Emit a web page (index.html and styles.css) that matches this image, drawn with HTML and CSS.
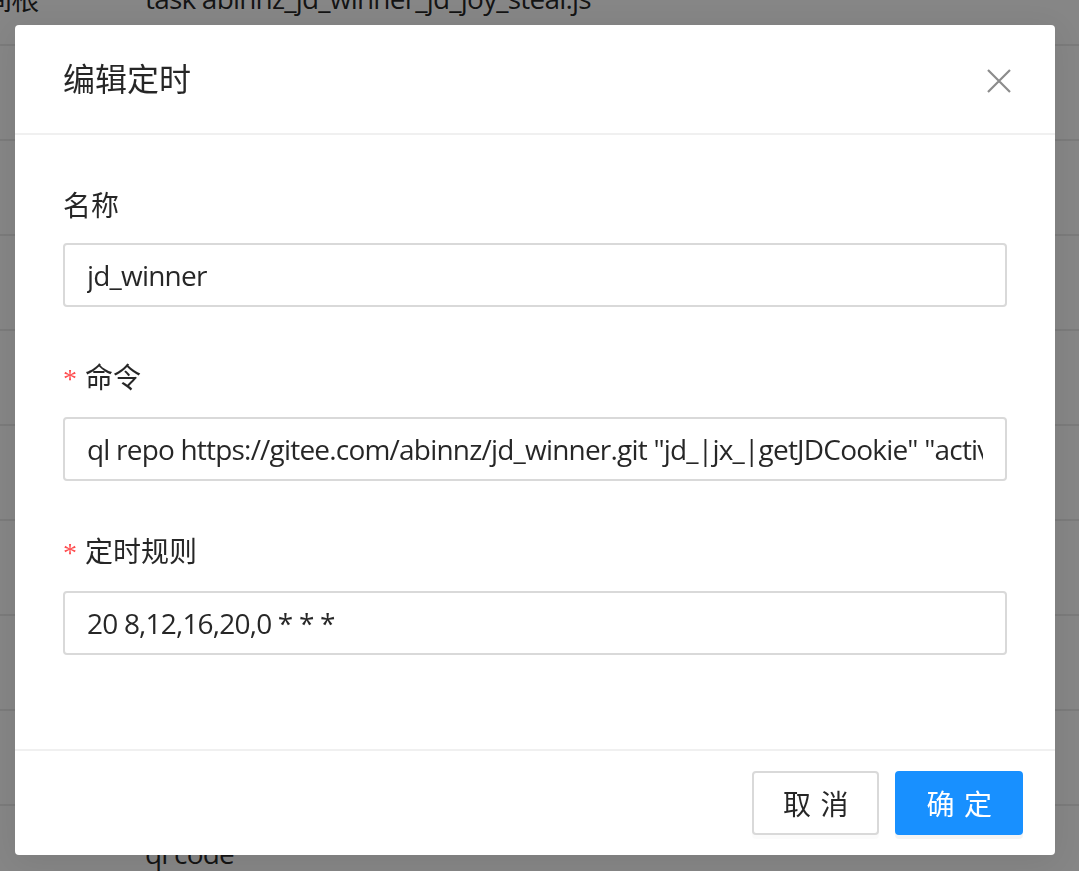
FILE: index.html
```html
<!DOCTYPE html>
<html lang="zh-CN">
<head>
  <meta charset="UTF-8">
  <meta name="viewport" content="width=device-width, initial-scale=1.0">
  <title>编辑定时</title>
  <link rel="stylesheet" href="styles.css">
</head>
<body>

<div class="page">
  <div class="table">
    <div class="row"><span class="cell-a">间根</span><span class="cell-b">task abinnz_jd_winner_jd_joy_steal.js</span></div>
    <div class="row"><span class="cell-a"></span><span class="cell-b"></span></div>
    <div class="row"><span class="cell-a"></span><span class="cell-b"></span></div>
    <div class="row"><span class="cell-a"></span><span class="cell-b"></span></div>
    <div class="row"><span class="cell-a"></span><span class="cell-b"></span></div>
    <div class="row"><span class="cell-a"></span><span class="cell-b"></span></div>
    <div class="row"><span class="cell-a"></span><span class="cell-b"></span></div>
    <div class="row"><span class="cell-a"></span><span class="cell-b"></span></div>
    <div class="row"><span class="cell-a"></span><span class="cell-b"></span></div>
    <div class="row"><span class="cell-a"></span><span class="cell-b">ql code</span></div>
  </div>
</div>

<div class="modal-mask"></div>

<div class="modal">
  <div class="modal-header">
    <div class="modal-title">编辑定时</div>
    <button class="modal-close" type="button" aria-label="Close">
      <svg width="24" height="24" viewBox="0 0 24 24">
        <path d="M1 1 L23 23 M23 1 L1 23" stroke="#8c8c8c" stroke-width="2.2" fill="none"/>
      </svg>
    </button>
  </div>

  <div class="modal-body">
    <form class="form">
      <div class="form-item">
        <label class="form-label">名称</label>
        <input class="form-input" type="text" value="jd_winner">
      </div>
      <div class="form-item">
        <label class="form-label required">命令</label>
        <input class="form-input" type="text" value='ql repo https://gitee.com/abinnz/jd_winner.git "jd_|jx_|getJDCookie" "activity|backUp" "^jd[^_]|USER|utils"'>
      </div>
      <div class="form-item">
        <label class="form-label required">定时规则</label>
        <input class="form-input" type="text" value="20 8,12,16,20,0 * * *">
      </div>
    </form>
  </div>

  <div class="modal-footer">
    <button class="btn" type="button"><span>取消</span></button>
    <button class="btn btn-primary" type="button"><span>确定</span></button>
  </div>
</div>

</body>
</html>
```

FILE: styles.css
```css
body {
  margin: 0;
  font-family: "Open Sans", "Noto Sans CJK SC", sans-serif;
  color: rgba(0, 0, 0, 0.85);
  background: #f4f4f4;
  overflow: hidden;
  height: 871px;
}

/* table behind the dialog */
.table {
  margin-top: -49px;
}

.row {
  display: flex;
  align-items: center;
  height: 93px;
  border-bottom: 2px solid #e0e0e0;
  font-size: 28px;
  letter-spacing: -0.8px;
  white-space: nowrap;
}

.cell-a {
  width: 161px;
  flex: 0 0 161px;
  margin-left: -16px;
}

.cell-b {
  flex: 1;
}

.modal-mask {
  position: fixed;
  inset: 0;
  background: rgba(0, 0, 0, 0.45);
}

.modal {
  position: absolute;
  top: 25px;
  left: 15px;
  width: 1040px;
  background: #fff;
  border-radius: 4px;
  box-shadow: 0 6px 32px rgba(0, 0, 0, 0.08);
}

.modal-header {
  padding: 32px 48px;
  border-bottom: 2px solid #f0f0f0;
}

.modal-title {
  font-size: 32px;
  line-height: 44px;
  color: rgba(0, 0, 0, 0.85);
}

.modal-close {
  position: absolute;
  top: 0;
  right: 0;
  width: 112px;
  height: 112px;
  padding: 0;
  border: 0;
  background: transparent;
  display: flex;
  align-items: center;
  justify-content: center;
}

.modal-body {
  padding: 48px 48px 46px;
}

.form-item {
  display: flex;
  flex-direction: column;
  margin-bottom: 48px;
}

.form-label {
  font-size: 28px;
  line-height: 44px;
  padding-bottom: 16px;
}

.form-label.required::before {
  content: "*";
  color: #ff4d4f;
  font-family: "Liberation Serif", serif;
  margin-right: 8px;
}

.form-input {
  height: 64px;
  box-sizing: border-box;
  padding: 8px 22px;
  border: 2px solid #d9d9d9;
  border-radius: 4px;
  font-family: "Open Sans", "Noto Sans CJK SC", sans-serif;
  font-size: 28px;
  letter-spacing: -0.8px;
  color: rgba(0, 0, 0, 0.85);
  outline: none;
}

.modal-footer {
  display: flex;
  justify-content: flex-end;
  gap: 16px;
  padding: 20px 32px;
  border-top: 2px solid #f0f0f0;
}

.btn {
  height: 64px;
  padding: 0 29px;
  border: 2px solid #d9d9d9;
  border-radius: 4px;
  background: #fff;
  color: rgba(0, 0, 0, 0.85);
  font-family: "Noto Sans CJK SC", sans-serif;
  font-size: 28px;
  line-height: 1;
  white-space: nowrap;
  box-shadow: 0 4px 0 rgba(0, 0, 0, 0.016);
}

.btn span {
  letter-spacing: 0.34em;
  margin-right: -0.34em;
}

.btn-primary {
  background: #1890ff;
  border-color: #1890ff;
  color: #fff;
  box-shadow: 0 4px 0 rgba(0, 0, 0, 0.045);
}
```
